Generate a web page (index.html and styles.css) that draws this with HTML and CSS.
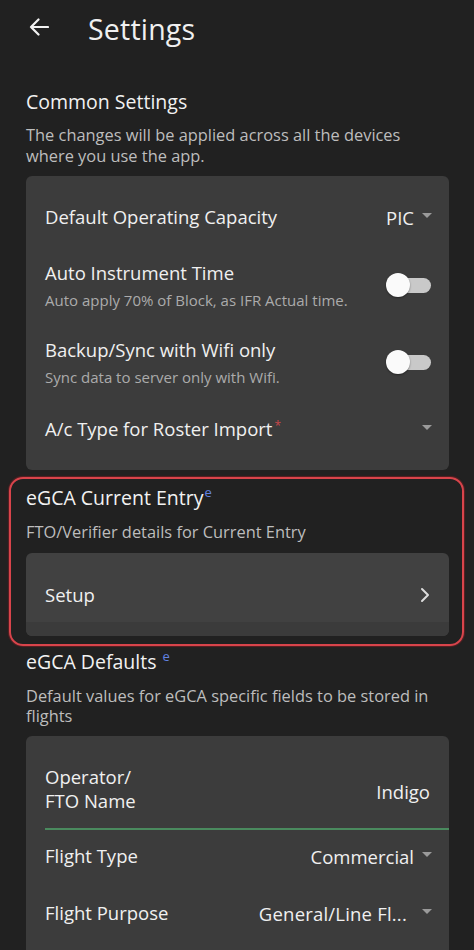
FILE: index.html
```html
<!DOCTYPE html>
<html>
<head>
<meta charset="utf-8">
<link rel="stylesheet" href="styles.css">
</head>
<body>
<header class="appbar">
  <svg class="back" width="20" height="18" viewBox="0 0 20 18"><path d="M19 9H2M9.5 1.5L2 9l7.5 7.5" fill="none" stroke="#f2f2f2" stroke-width="2.2" stroke-linecap="round" stroke-linejoin="round"/></svg>
  <h1 class="title">Settings</h1>
</header>
<main class="content">
  <h2 class="sec-title first">Common Settings</h2>
  <p class="sec-desc">The changes will be applied across all the devices where you use the app.</p>
  <div class="card common">
    <div class="row single">
      <span class="label">Default Operating Capacity</span>
      <span class="value">PIC<i class="caret"></i></span>
    </div>
    <div class="row double">
      <div class="texts">
        <span class="label">Auto Instrument Time</span>
        <span class="sub">Auto apply 70% of Block, as IFR Actual time.</span>
      </div>
      <span class="toggle"><span class="thumb"></span></span>
    </div>
    <div class="row double">
      <div class="texts">
        <span class="label">Backup/Sync with Wifi only</span>
        <span class="sub">Sync data to server only with Wifi.</span>
      </div>
      <span class="toggle"><span class="thumb"></span></span>
    </div>
    <div class="row single">
      <span class="label">A/c Type for Roster Import<sup class="req">*</sup></span>
      <span class="value"><i class="caret"></i></span>
    </div>
  </div>

  <section class="highlight">
    <h2 class="sec-title">eGCA Current Entry<sup class="e">e</sup></h2>
    <p class="sec-desc one">FTO/Verifier details for Current Entry</p>
    <div class="card setup">
      <div class="setup-main">
        <span class="label">Setup</span>
        <svg class="chev" width="10" height="16" viewBox="0 0 10 16"><path d="M2 2l6 6-6 6" fill="none" stroke="#dcdcdc" stroke-width="2" stroke-linecap="round" stroke-linejoin="round"/></svg>
      </div>
      <div class="setup-foot"></div>
    </div>
  </section>

  <h2 class="sec-title defaults">eGCA Defaults <sup class="e">e</sup></h2>
  <p class="sec-desc">Default values for eGCA specific fields to be stored in flights</p>
  <div class="card egca">
    <div class="row op">
      <span class="label">Operator/<br>FTO Name</span>
      <span class="value">Indigo</span>
    </div>
    <div class="row ft">
      <span class="label">Flight Type</span>
      <span class="value">Commercial<i class="caret"></i></span>
    </div>
    <div class="row fp">
      <span class="label">Flight Purpose</span>
      <span class="value"><span class="trunc">General/Line Fl...</span><i class="caret"></i></span>
    </div>
  </div>
</main>
</body>
</html>
```
FILE: styles.css
```css
* { box-sizing: border-box; }
html, body { margin: 0; padding: 0; }
body {
  width: 474px;
  height: 950px;
  overflow: hidden;
  background: #212121;
  color: #f0f0f0;
  font-family: "Open Sans", "Noto Sans", sans-serif;
}
.appbar {
  height: 60px;
  display: flex;
  align-items: center;
  padding-left: 29px;
}
.back { display: block; margin-top: -6px; }
.title {
  margin: -2px 0 0 39px;
  font-size: 28.5px;
  font-weight: 400;
  line-height: 34px;
  letter-spacing: 0.2px;
}
.content { padding: 0 25px 0 26px; }
.sec-title {
  margin: 0;
  font-size: 19.5px;
  font-weight: 500;
  line-height: 24px;
  color: #f2f2f2;
}
.sec-title.first { margin-top: 30px; }
.sec-desc {
  margin: 10px 0 0;
  font-size: 16.4px;
  line-height: 21px;
  color: #bdbdbd;
}
.card {
  background: #3c3c3c;
  border-radius: 6px;
}
.common {
  margin-top: 10px;
  padding: 12px 19px 12px;
}
.row {
  display: flex;
  align-items: center;
  justify-content: space-between;
}
.row.single { height: 58px; }
.row.double { height: 77px; }
.label {
  font-size: 18.5px;
  line-height: 26px;
  color: #f0f0f0;
}
.value {
  display: flex;
  align-items: center;
  font-size: 18.5px;
  color: #f0f0f0;
  margin-right: -2px;
}
.caret {
  display: inline-block;
  width: 0;
  height: 0;
  border-left: 5px solid transparent;
  border-right: 5px solid transparent;
  border-top: 5px solid #9a9a9a;
  margin-left: 8px;
  margin-top: -3px;
}
.trunc { margin-right: 7px; letter-spacing: 0.2px; }
.texts { display: flex; flex-direction: column; }
.sub {
  margin-top: 4px;
  font-size: 15px;
  line-height: 20px;
  color: #ababab;
}
.toggle {
  position: relative;
  width: 45px;
  height: 24px;
  margin-right: -1px;
  display: block;
}
.toggle::before {
  content: "";
  position: absolute;
  left: 8px;
  right: 0;
  top: 5px;
  height: 15px;
  border-radius: 8px;
  background: #c9c9c9;
}
.thumb {
  position: absolute;
  left: 0;
  top: 0;
  width: 24px;
  height: 24px;
  border-radius: 50%;
  background: #fafafa;
  box-shadow: 0 1px 2px rgba(0,0,0,0.4);
}
.req {
  color: #c9474a;
  font-size: 12px;
  vertical-align: 6px;
  line-height: 0;
  margin-left: 2px;
}
.e {
  color: #6282e0;
  font-size: 13px;
  vertical-align: 8px;
  line-height: 0;
  margin-left: 1px;
}
.highlight {
  margin: 7px -15px 0 -17px;
  padding: 7px 13px 8px 15px;
  border: 2px solid #d8444b;
  border-radius: 14px;
  box-shadow: 0 0 1px 1px rgba(150,30,35,0.5);
}
.sec-desc.one { margin-top: 10.5px; }
.setup {
  margin-top: 11.5px;
  height: 83px;
  overflow: hidden;
  background: #414141;
  display: flex;
  flex-direction: column;
}
.setup-main {
  flex: 1;
  display: flex;
  align-items: center;
  justify-content: space-between;
  padding: 14px 19px 0;
}
.chev { display: block; margin-right: 0; }
.setup-foot {
  height: 14px;
  background: #3b3b3b;
}
.defaults { margin-top: 4px; }
.sec-title.defaults + .sec-desc { margin-top: 11.5px; line-height: 20px; }
.egca {
  margin-top: 10.5px;
  padding-left: 19px;
  height: 240px;
}
.row.op {
  padding: 29px 19px 15px 0;
  border-bottom: 2px solid #4a8a5e;
  line-height: 24px;
}
.row.op .label { line-height: 24px; }
.row.op .value { margin-top: 6px; margin-right: 0; }
.row.ft { height: 52px; padding-right: 19px; }
.row.fp { height: 62px; padding-right: 19px; }
```
